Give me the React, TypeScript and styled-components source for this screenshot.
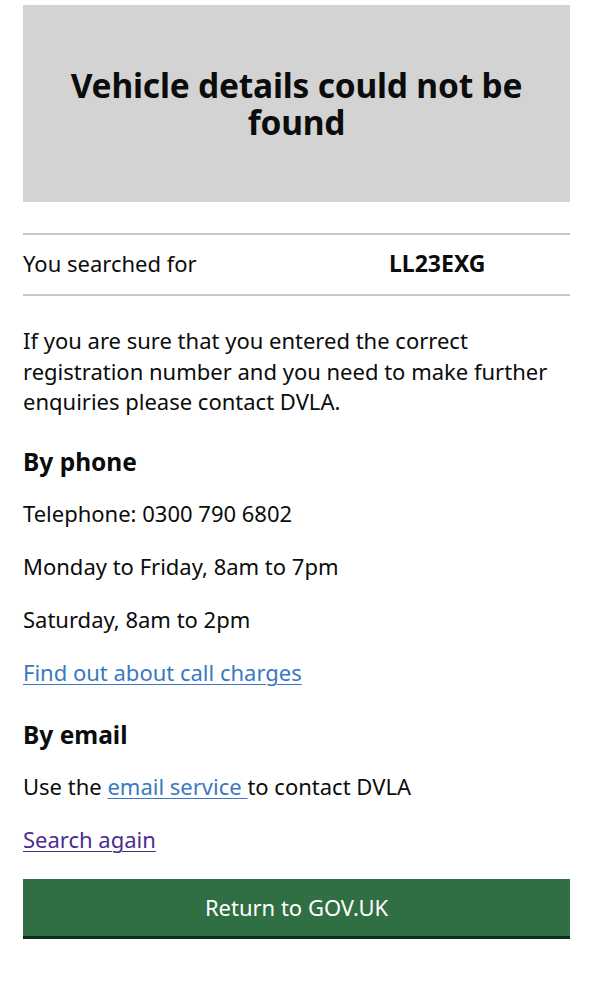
import React from 'react'
import styled, { createGlobalStyle } from 'styled-components'

const GlobalStyle = createGlobalStyle`
	body {
		margin: 0;
		background: #fff;
		color: #0b0c0c;
		font-family: 'Noto Sans', 'Liberation Sans', Arial, sans-serif;
	}
`

const Page = styled.main`
	padding: 5px 23px 40px;
`

const Banner = styled.div`
	background: #d3d3d3;
	height: 197px;
	display: flex;
	align-items: center;
	justify-content: center;
	padding: 0 20px;
`

const Title = styled.h1`
	margin: 0;
	font-size: 33.5px;
	line-height: 37px;
	font-weight: 700;
	text-align: center;
	letter-spacing: -0.2px;
`

const Summary = styled.dl`
	margin: 31px 0 0;
	display: grid;
	grid-template-columns: 366px 1fr;
	align-items: center;
	box-sizing: border-box;
	height: 63px;
	padding-bottom: 3px;
	border-top: 2px solid #c8c8c8;
	border-bottom: 2px solid #c8c8c8;
	font-size: 22px;
`

const Key = styled.dt`
	margin: 0;
`

const Value = styled.dd`
	margin: 0;
	font-size: 23px;
	font-weight: 700;
`

const Body = styled.p`
	margin: 0;
	font-size: 22px;
	line-height: 30.5px;
`

const Intro = styled(Body)`
	margin-top: 29px;
`

const Heading = styled.h2`
	margin: 0;
	font-size: 24.5px;
	font-weight: 700;
	line-height: 28px;
`

const Stack = styled.div<{ $top: number }>`
	display: flex;
	flex-direction: column;
	align-items: flex-start;
	gap: 22.5px;
	margin-top: ${p => p.$top}px;
`

const Link = styled.a<{ $visited?: boolean }>`
	color: ${p => (p.$visited ? '#4c2c92' : '#3a78c2')};
	text-decoration: underline;
	text-underline-offset: 3px;
	text-decoration-thickness: 1px;
	font-size: 22px;
	line-height: 30.5px;
`

const Button = styled.a`
	display: flex;
	align-items: center;
	justify-content: center;
	margin-top: 24px;
	height: 57px;
	background: #306f43;
	color: #fff;
	font-size: 22px;
	text-decoration: none;
	box-shadow: 0 3px 0 #0b2a17;
`

export default function App() {
	return (
		<>
			<GlobalStyle />
			<Page>
				<Banner>
					<Title>Vehicle details could not be found</Title>
				</Banner>
				<Summary>
					<Key>You searched for</Key>
					<Value>LL23EXG</Value>
				</Summary>
				<Intro>
					If you are sure that you entered the correct registration number and
					you need to make further enquiries please contact DVLA.
				</Intro>
				<Stack $top={31}>
					<Heading>By phone</Heading>
					<Body>Telephone: 0300 790 6802</Body>
					<Body>Monday to Friday, 8am to 7pm</Body>
					<Body>Saturday, 8am to 2pm</Body>
					<Link href="#">Find out about call charges</Link>
				</Stack>
				<Stack $top={33}>
					<Heading>By email</Heading>
					<Body>
						Use the <Link href="#">email service </Link>to contact DVLA
					</Body>
					<Link href="#" $visited>
						Search again
					</Link>
				</Stack>
				<Button href="#">Return to GOV.UK</Button>
			</Page>
		</>
	)
}
